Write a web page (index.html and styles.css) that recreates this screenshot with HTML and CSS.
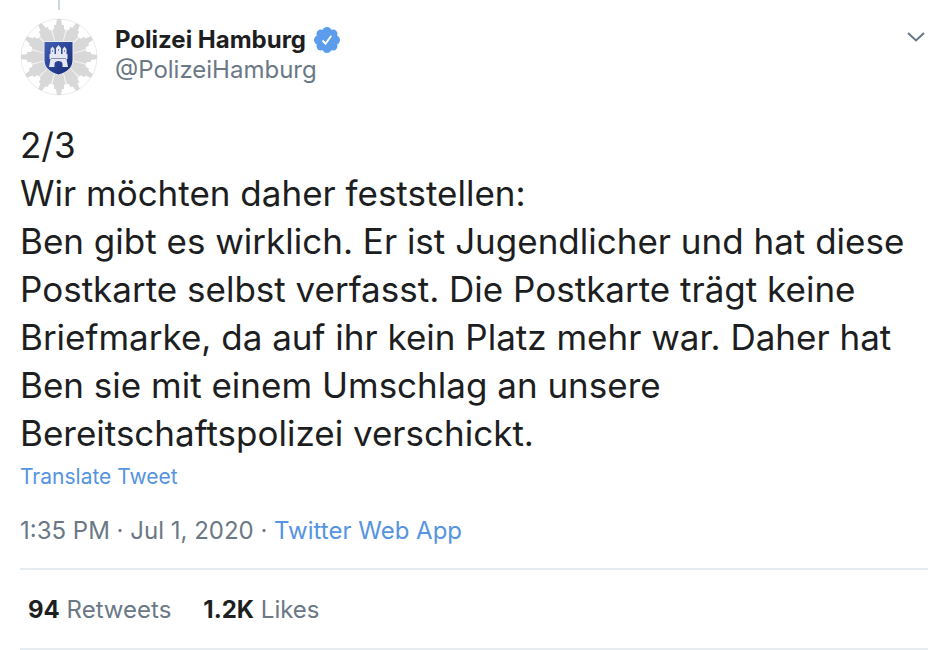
FILE: index.html
```html
<!DOCTYPE html>
<html lang="de">
<head>
    <meta charset="UTF-8">
    <meta name="viewport" content="width=device-width, initial-scale=1.0">
    <title>Polizei Hamburg</title>
    <link rel="stylesheet" href="styles.css">
</head>
<body>
    <article class="tweet">
        <div class="thread-line"></div>
        <header class="tweet-header">
            <a href="#" class="avatar" aria-label="Polizei Hamburg">
                <svg viewBox="-39 -39 78 78" width="78" height="78">
                    <defs>
                        <linearGradient id="shield" x1="0" y1="0" x2="1" y2="1">
                            <stop offset="0" stop-color="#4560b4"/>
                            <stop offset="0.5" stop-color="#2b4496"/>
                            <stop offset="1" stop-color="#182a70"/>
                        </linearGradient>
                        <path id="ray" d="M0 0L-7 -27L-5 -28L-5 -32L-3 -32L-2 -38L2 -38L3 -32L5 -32L5 -28L7 -27Z"/>
                        <path id="slit" d="M0 -10L-0.900 -28L0.900 -28Z"/>
                    </defs>
                    <circle r="38" fill="#fff" stroke="#ececec"/>
                    <g fill="#d8d8d9">
                        <use href="#ray"/>
                        <use href="#ray" transform="rotate(30)"/>
                        <use href="#ray" transform="rotate(60)"/>
                        <use href="#ray" transform="rotate(90)"/>
                        <use href="#ray" transform="rotate(120)"/>
                        <use href="#ray" transform="rotate(150)"/>
                        <use href="#ray" transform="rotate(180)"/>
                        <use href="#ray" transform="rotate(210)"/>
                        <use href="#ray" transform="rotate(240)"/>
                        <use href="#ray" transform="rotate(270)"/>
                        <use href="#ray" transform="rotate(300)"/>
                        <use href="#ray" transform="rotate(330)"/>
                    </g>
                    <g fill="#efefef">
                        <use href="#slit" transform="rotate(15)"/>
                        <use href="#slit" transform="rotate(45)"/>
                        <use href="#slit" transform="rotate(75)"/>
                        <use href="#slit" transform="rotate(105)"/>
                        <use href="#slit" transform="rotate(135)"/>
                        <use href="#slit" transform="rotate(165)"/>
                        <use href="#slit" transform="rotate(195)"/>
                        <use href="#slit" transform="rotate(225)"/>
                        <use href="#slit" transform="rotate(255)"/>
                        <use href="#slit" transform="rotate(285)"/>
                        <use href="#slit" transform="rotate(315)"/>
                        <use href="#slit" transform="rotate(345)"/>
                    </g>
                    <path d="M-15 -15.500H14V3C14 11 8 15.500 -0.500 18C-9 15.500 -15 11 -15 3Z" fill="url(#shield)" stroke="#e9ebf2"/>
                    <path d="M-8.500 -3V-8L-6.500 -10.500L-4.500 -8V-3H-3V-9L-0.500 -12L2 -9V-3H3.500V-8L5.500 -10.500L7.500 -8V-3H8.500V2H7.500L9 10H3.500V7C3.500 3 -4.500 3 -4.500 7V10H-10L-8.500 2H-9.500V-3Z" fill="#e4e7f0"/>
                    <path d="M-6.500 -7v2M5.500 -7v2M-0.500 -8v2M-8 1.500H7" fill="none" stroke="#8591bd"/>
                </svg>
            </a>
            <div class="names">
                <div class="name-row">
                    <a href="#" class="name">Polizei Hamburg</a>
                    <svg class="verified" viewBox="0 0 26 26" width="26" height="26" role="img" aria-label="Verified account">
                        <g fill="#5b9cec">
                            <circle cx="13" cy="13" r="10"/>
                            <circle cx="13" cy="4.500" r="4.500"/>
                            <circle cx="19" cy="7" r="4.500"/>
                            <circle cx="21.500" cy="13" r="4.500"/>
                            <circle cx="19" cy="19" r="4.500"/>
                            <circle cx="13" cy="21.500" r="4.500"/>
                            <circle cx="7" cy="19" r="4.500"/>
                            <circle cx="4.500" cy="13" r="4.500"/>
                            <circle cx="7" cy="7" r="4.500"/>
                        </g>
                        <path d="M8.500 13.500L11.500 16.800L17.300 8.800" fill="none" stroke="#fff" stroke-width="1.900"/>
                    </svg>
                </div>
                <a href="#" class="handle">@PolizeiHamburg</a>
            </div>
            <button class="more" type="button" aria-label="More">
                <svg viewBox="0 0 18 10" width="18" height="10">
                    <path d="M1 1L9 8.500L17 1" fill="none" stroke="#657786" stroke-width="2"/>
                </svg>
            </button>
        </header>

        <p class="text">2/3<br>
            Wir möchten daher feststellen:<br>
            Ben gibt es wirklich. Er ist Jugendlicher und hat diese Postkarte selbst verfasst. Die Postkarte trägt keine Briefmarke, da auf ihr kein Platz mehr war. Daher hat Ben sie mit einem Umschlag an unsere Bereitschaftspolizei verschickt.</p>
        <button class="translate" type="button">Translate Tweet</button>

        <div class="meta">1:35 PM · Jul 1, 2020 · <a href="#">Twitter Web App</a></div>

        <div class="stats">
            <a href="#"><strong>94</strong> Retweets</a>
            <a href="#"><strong>1.2K</strong> Likes</a>
        </div>
    </article>
</body>
</html>
```
FILE: styles.css
```css
body {
    margin: 0;
    background: #fff;
    color: #1c1e21;
    font-family: Inter, "Liberation Sans", sans-serif;
    font-size: 24px;
    line-height: 30px;
}

a {
    color: inherit;
    text-decoration: none;
}

button {
    padding: 0;
    border: none;
    background: none;
    font-family: inherit;
    cursor: pointer;
}

svg {
    display: block;
}

.tweet {
    padding: 0 20px;
}

.thread-line {
    width: 2px;
    height: 10px;
    margin-left: 38px;
    background: #ccd6dd;
}

.tweet-header {
    display: flex;
    align-items: flex-start;
    gap: 17px;
    padding-top: 8px;
}

.names {
    flex: 1;
    padding-top: 7px;
}

.name-row {
    display: flex;
    align-items: center;
    gap: 8px;
}

.name {
    font-weight: 700;
}

.handle {
    display: block;
    color: #6b7885;
}

.more {
    margin-top: 14px;
    margin-right: 3px;
}

.text {
    margin: 25px 0 0;
    font-size: 35px;
    line-height: 48px;
}

.translate {
    display: block;
    margin-top: 5px;
    color: #5694df;
    font-size: 21px;
    line-height: 30px;
}

.meta {
    margin-top: 24px;
    padding-bottom: 22px;
    color: #6b7885;
}

.meta a {
    color: #5694df;
}

.stats {
    display: flex;
    gap: 32px;
    padding: 25px 8px 23px;
    border-top: 2px solid #e6ecf0;
    border-bottom: 2px solid #e6ecf0;
    color: #6b7885;
}

.stats strong {
    color: #1c1e21;
    font-weight: 700;
}
```
